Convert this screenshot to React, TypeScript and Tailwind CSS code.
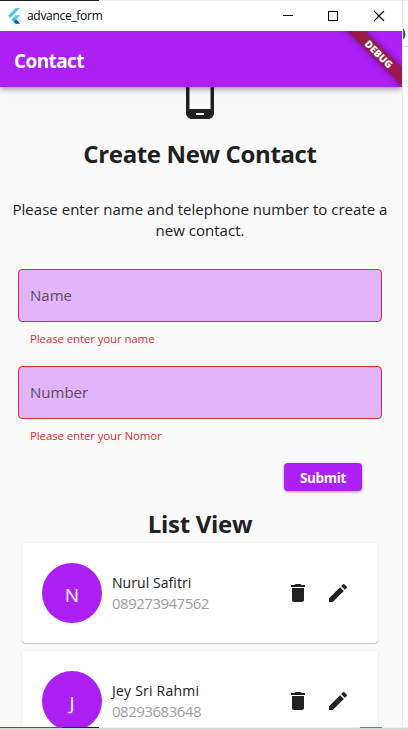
import React from "react";

const contacts = [
  { initial: "N", name: "Nurul Safitri", phone: "089273947562", nameCls: "tracking-[0.06px]", phoneCls: "tracking-[-0.5px]" },
  { initial: "J", name: "Jey Sri Rahmi", phone: "08293683648", nameCls: "tracking-[0.22px]", phoneCls: "tracking-[-0.48px]" },
];

function FlutterLogo() {
  return (
    <svg className="ml-[7px] h-4 w-4 shrink-0" viewBox="0 0 16 16">
      <path d="M8.5 0h4.7L3.3 10.1 1 7.8z" fill="#54c5f8" />
      <path d="M8.5 7.3h4.7L9.2 11.5 6.8 9.2z" fill="#54c5f8" />
      <path d="M4.5 11.5l2.3-2.3 2.4 2.3-2.4 2.4z" fill="#29b6f6" />
      <path d="M6.8 13.9l2.4-2.4 4 4.3H8.6z" fill="#01579b" />
    </svg>
  );
}

function TitleBar() {
  return (
    <header className="flex h-[31px] w-[402px] shrink-0 items-center bg-white">
      <FlutterLogo />
      <span className="ml-1 whitespace-nowrap text-[12px] leading-4 tracking-[-0.3px] text-black">advance_form</span>
      <svg className="ml-auto mr-[13px] h-3 w-[106px]" viewBox="0 0 106 12" fill="none" stroke="#000" shapeRendering="crispEdges">
        <path d="M0 5.5h10M45.5 1.5h9v9h-9z" />
        <path d="M91 1l10 10M101 1L91 11" shapeRendering="auto" strokeWidth="1.1" />
      </svg>
    </header>
  );
}

function AppBar() {
  return (
    <div className="relative z-10 flex h-14 w-[402px] shrink-0 items-center bg-[#ad20f3] shadow-[0_2px_4px_-1px_rgba(0,0,0,0.2),0_4px_5px_rgba(0,0,0,0.14),0_1px_10px_rgba(0,0,0,0.12)] [clip-path:inset(0_0_-16px_0)]">
      <h1 className="ml-[14px] mt-1 text-[19px] font-bold leading-6 tracking-[-0.6px] text-white">Contact</h1>
      <div className="absolute right-0 top-0 h-14 w-[76px] overflow-hidden">
        <div className="absolute left-[-2px] top-[17px] flex h-3 w-[110px] rotate-45 items-center justify-center bg-[#9a1b4a] shadow-[0_0_6px_rgba(0,0,0,0.5)]">
          <span className="text-[10px] font-black leading-3 text-white">DEBUG</span>
        </div>
      </div>
    </div>
  );
}

function Field({ label, error }: { label: string; error: string }) {
  return (
    <div className="mx-[18px] h-[97px] w-[364px] shrink-0">
      <div className="flex h-[53px] items-center rounded border border-[#d32f2f] bg-[#e1b5f7] pl-[11px] text-[15px] text-[#5f4b69]">
        <span>{label}</span>
      </div>
      <p className="ml-3 mt-[9px] text-[11.5px] leading-4 tracking-[-0.13px] text-[#d32f2f]">{error}</p>
    </div>
  );
}

function ContactCard({ c }: { c: (typeof contacts)[number] }) {
  return (
    <li className="mx-[22px] mb-2 flex h-[100px] w-[356px] shrink-0 items-center rounded bg-white px-5 shadow-[0_1px_1px_rgba(0,0,0,0.22),0_0_2px_rgba(0,0,0,0.08)]">
      <div className="flex h-[60px] w-[60px] items-center justify-center rounded-full bg-[#ad20f3] pt-1 text-[19px] leading-6 text-white">{c.initial}</div>
      <div className="ml-[10px] flex-1">
        <p className={"text-[14px] leading-5 text-[#212121] " + c.nameCls}>{c.name}</p>
        <p className={"text-[15px] leading-5 text-[#9e9e9e] " + c.phoneCls}>{c.phone}</p>
      </div>
      <svg className="h-6 w-6" viewBox="0 0 24 24" fill="#212121">
        <path d="M6 19c0 1.1.9 2 2 2h8c1.1 0 2-.9 2-2V7H6v12zM19 4h-3.5l-1-1h-5l-1 1H5v2h14V4z" />
      </svg>
      <svg className="ml-4 mr-2 h-6 w-6" viewBox="0 0 24 24" fill="#212121">
        <path d="M3 17.25V21h3.75L17.81 9.94l-3.75-3.75L3 17.25zM20.71 7.04c.39-.39.39-1.02 0-1.41l-2.34-2.34a.9959.9959 0 0 0-1.41 0l-1.83 1.83 3.75 3.75 1.83-1.83z" />
      </svg>
    </li>
  );
}

export default function App() {
  return (
    <div className="relative flex h-[730px] w-[408px] flex-col overflow-hidden bg-white font-['Open_Sans','Noto_Sans',sans-serif]">
      <TitleBar />
      <AppBar />
      <main className="flex h-[640px] w-[402px] shrink-0 flex-col overflow-hidden bg-[#fafafa]">
        <svg className="ml-[176px] mt-[-14px] h-12 w-12 shrink-0" viewBox="0 0 24 24" fill="#212121">
          <path d="M16 1H8C6.34 1 5 2.34 5 4v16c0 1.66 1.34 3 3 3h8c1.66 0 3-1.34 3-3V4c0-1.66-1.34-3-3-3zm-2 20h-4v-1h4v1zm3.25-3H6.75V4h10.5v14z" />
        </svg>
        <h2 className="mt-[17px] h-8 w-[400px] shrink-0 whitespace-nowrap text-center text-[24px] font-bold leading-8 tracking-[-0.36px] text-[#212121]">Create New Contact</h2>
        <p className="mt-[29px] h-[70px] w-[400px] shrink-0 whitespace-nowrap text-center text-[15px] leading-[21px] tracking-[0.02px] text-[#212121]">
          Please enter name and telephone number to create a<br />new contact.
        </p>
        <Field label="Name" error="Please enter your name" />
        <Field label="Number" error="Please enter your Nomor" />
        <button className="ml-[284px] flex h-7 w-[78px] shrink-0 items-center justify-center rounded bg-[#ad20f3] pt-[2px] text-[13.5px] font-bold leading-4 tracking-[-0.35px] text-white shadow-[0_1px_3px_rgba(0,0,0,0.4)]">Submit</button>
        <h2 className="mt-[17px] h-8 w-[400px] shrink-0 whitespace-nowrap text-center text-[24px] font-bold leading-8 tracking-[-0.3px] text-[#212121]">List View</h2>
        <ul className="mt-[3px] flex shrink-0 flex-col">
          {contacts.map((c) => (
            <ContactCard key={c.name} c={c} />
          ))}
        </ul>
      </main>
      <footer className="flex h-[3px] w-[408px] shrink-0 flex-col bg-[#d3d9d5]">
        <div className="flex h-px w-full bg-[#f0f0f0]">
          <div className="w-[62px] bg-[#6d5c10]" />
          <div className="w-[37px] bg-[#141422]" />
          <div className="ml-[57px] w-0" />
          <div className="ml-[204px] w-[22px] bg-[#3c8dbc]" />
        </div>
      </footer>
      <div className="absolute left-0 top-0 flex h-px w-full bg-[#ececec]">
        <div className="w-[99px] bg-[#202020]" />
      </div>
      <div className="absolute left-[402px] top-0 h-[727px] w-1.5 overflow-hidden border-l border-[#ebebeb]">
        <div className="absolute left-[-12px] top-[27px] h-[14px] w-[14px] rounded-full bg-[#0f66b5] shadow-[0_0_0_0.5px_#0f66b5]" />
        <div className="absolute left-0 top-[46px] h-px w-1.5 bg-[#d8d8d8]" />
      </div>
    </div>
  );
}
